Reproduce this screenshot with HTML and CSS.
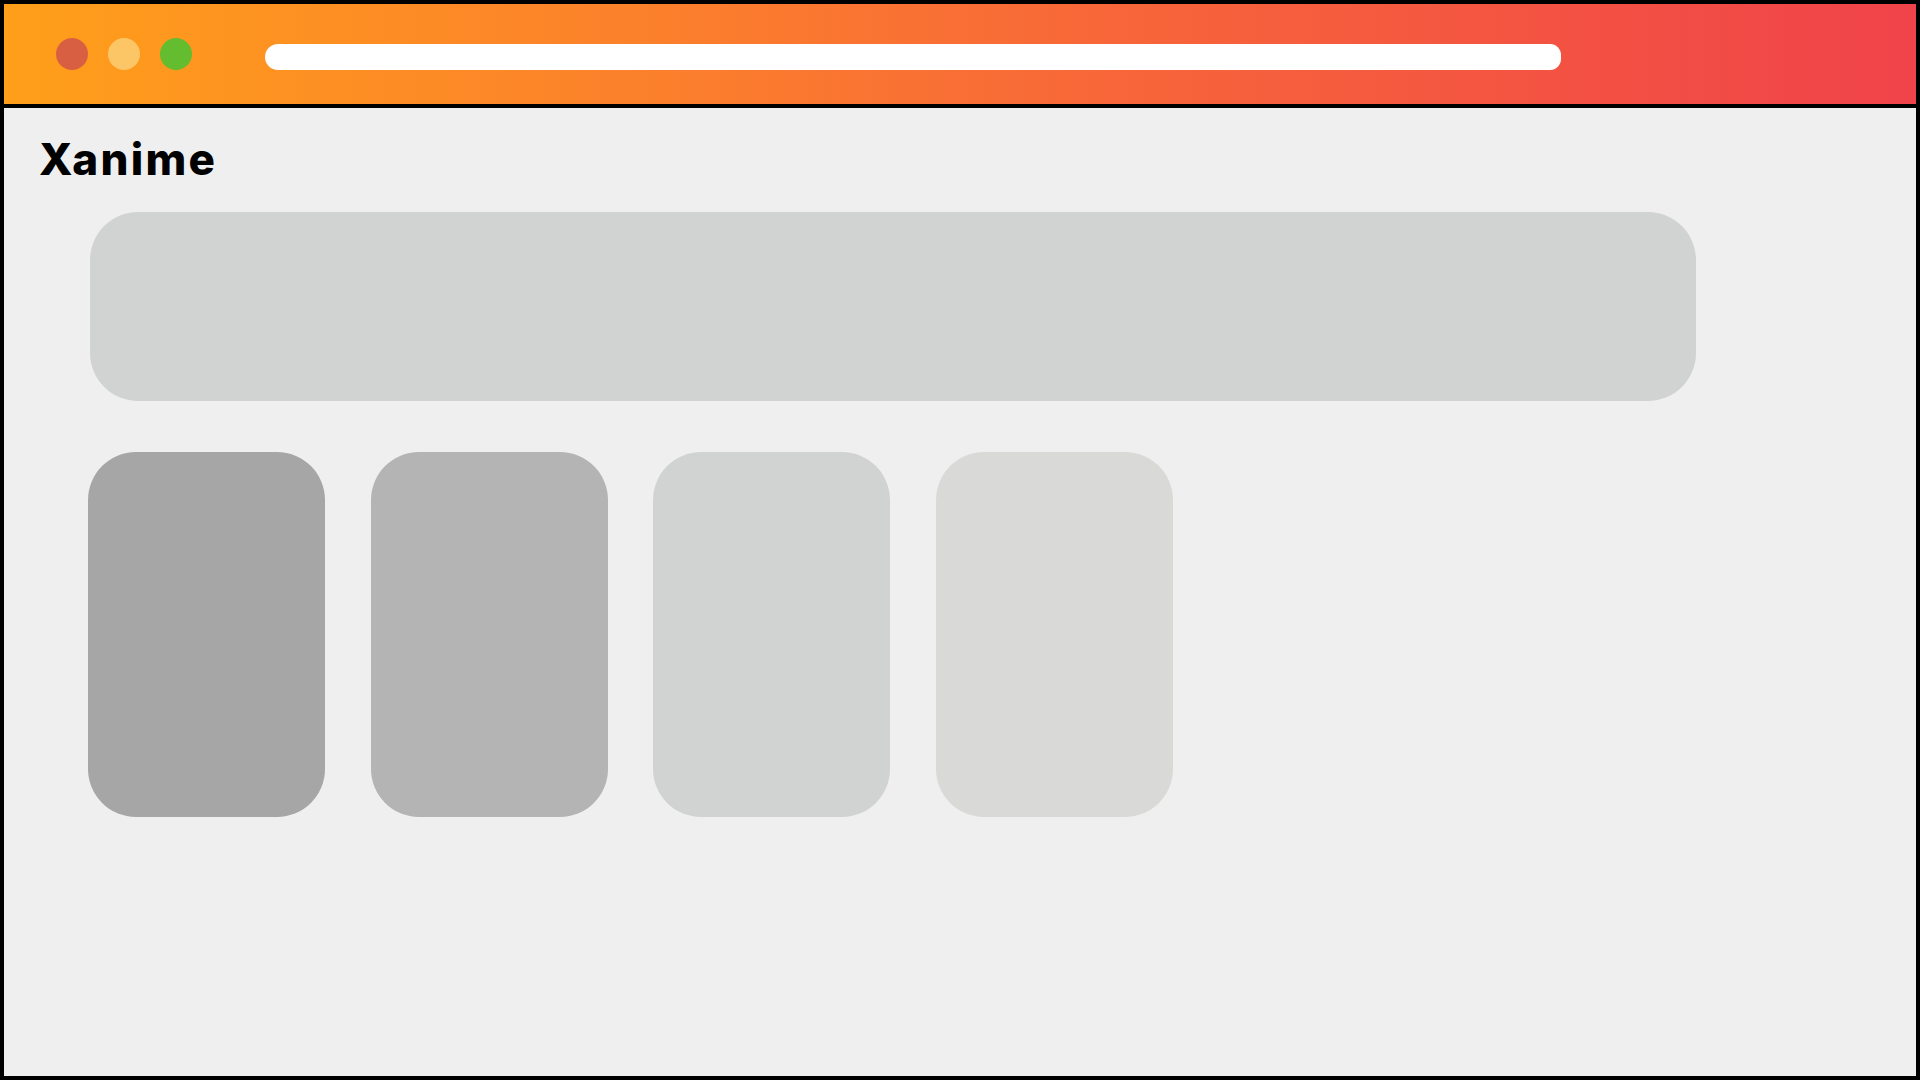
FILE: index.html
```html
<!DOCTYPE html>
<html lang="en">
<head>
<meta charset="utf-8">
<title>Xanime</title>
<link rel="stylesheet" href="styles.css">
</head>
<body>
<div class="frame">
  <header class="topbar">
    <div class="dots">
      <span class="dot dot-red"></span>
      <span class="dot dot-yellow"></span>
      <span class="dot dot-green"></span>
    </div>
    <div class="urlbar"></div>
  </header>
  <main class="content">
    <h1 class="brand">Xanime</h1>
    <div class="banner"></div>
    <div class="cards">
      <div class="card card-1"></div>
      <div class="card card-2"></div>
      <div class="card card-3"></div>
      <div class="card card-4"></div>
    </div>
  </main>
</div>
</body>
</html>
```

FILE: styles.css
```css
* { box-sizing: border-box; }
html, body {
  margin: 0;
  padding: 0;
  width: 1920px;
  height: 1080px;
  overflow: hidden;
  background: #000;
}
.frame {
  width: 1920px;
  height: 1080px;
  border: 4px solid #000;
  display: flex;
  flex-direction: column;
  background: #efefef;
}
.topbar {
  height: 104px;
  flex: 0 0 104px;
  border-bottom: 4px solid #000;
  background: linear-gradient(90deg, #ff9f1a 0%, #fb7f2c 35%, #f7643a 60%, #f0434a 100%);
  display: flex;
  align-items: center;
  padding-left: 52px;
}
.dots {
  display: flex;
  gap: 20px;
}
.dot {
  width: 32px;
  height: 32px;
  border-radius: 50%;
  display: block;
}
.dot-red { background: #d95f43; }
.dot-yellow { background: #fcc667; }
.dot-green { background: #64bc2f; }
.urlbar {
  width: 1296px;
  height: 26px;
  margin-left: 73px;
  margin-top: 6px;
  background: #fff;
  border-radius: 13px 11px 11px 13px;
}
.content {
  flex: 1;
  padding: 0 0 0 35px;
}
.brand {
  margin: 25px 0 0 0;
  font-family: Inter, "Noto Sans", sans-serif;
  font-weight: 800;
  font-size: 44px;
  line-height: 52px;
  letter-spacing: 2.3px;
  color: #000;
}
.banner {
  margin: 27px 0 0 51px;
  width: 1606px;
  height: 189px;
  border-radius: 48px;
  background: #d1d3d2;
}
.cards {
  margin: 51px 0 0 49px;
  display: flex;
  gap: 45.67px;
}
.card {
  width: 237px;
  height: 365px;
  border-radius: 48px;
}
.card-1 { background: #a6a6a6; }
.card-2 { background: #b4b4b4; }
.card-3 { background: #d1d3d2; }
.card-4 { background: #d9d9d7; }
```
